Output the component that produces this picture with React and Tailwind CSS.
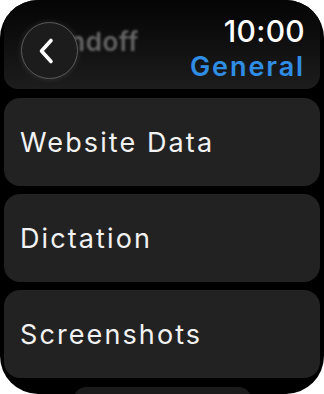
export default function App() {
    const items = ["Website Data", "Dictation", "Screenshots"];

    return (
        <div
            className="w-[324px] h-[394px] bg-white"
            style={{ fontFamily: "Inter, 'Noto Sans', sans-serif" }}
        >
            <div className="relative flex flex-col w-full h-full bg-black rounded-[38px] overflow-hidden">
                {/* header */}
                <div className="relative mx-1 h-[89px] shrink-0 rounded-b-[14px] bg-gradient-to-b from-[#050505] to-[#1d1d1d] flex justify-between items-start pl-[17px] pr-[15px]">
                    <span className="absolute left-[30px] top-[29px] text-[26px] font-semibold leading-none text-[#666666] blur-[1.3px] tracking-[0.5px] select-none">
                        Handoff
                    </span>
                    <button className="relative mt-[22px] w-[57px] h-[57px] rounded-full border-[1.5px] border-[#5a5a5a] bg-[#1c1c1c] shadow-[0_0_6px_rgba(255,255,255,0.12)] flex items-center justify-center">
                        <svg width="20" height="28" viewBox="0 0 20 28" className="mr-[4px]">
                            <path
                                d="M13 3.5 L3.5 14 L13 24.5"
                                fill="none"
                                stroke="white"
                                strokeWidth="3.6"
                                strokeLinecap="round"
                                strokeLinejoin="round"
                            />
                        </svg>
                    </button>
                    <div className="flex flex-col items-end">
                        <span className="mt-[16px] text-[30px] leading-none text-white font-medium tracking-[0.3px]">
                            10:00
                        </span>
                        <span className="mt-[7px] text-[27px] leading-none font-semibold text-[#2f8de4] tracking-[1.9px]">
                            General
                        </span>
                    </div>
                </div>

                {/* list */}
                <div className="flex flex-col gap-2 mt-[9px] mx-1">
                    {items.map((label) => (
                        <div
                            key={label}
                            className="h-[88px] rounded-[16px] bg-[#222222] flex items-center px-4"
                        >
                            <span className="text-[27px] text-[#f2f2f2] leading-none tracking-[2.1px]">
                                {label}
                            </span>
                        </div>
                    ))}
                </div>
                <div className="self-center mt-[9px] w-[177px] h-[20px] shrink-0 rounded-t-[12px] bg-[#1b1b1b]" />
            </div>
        </div>
    );
}
